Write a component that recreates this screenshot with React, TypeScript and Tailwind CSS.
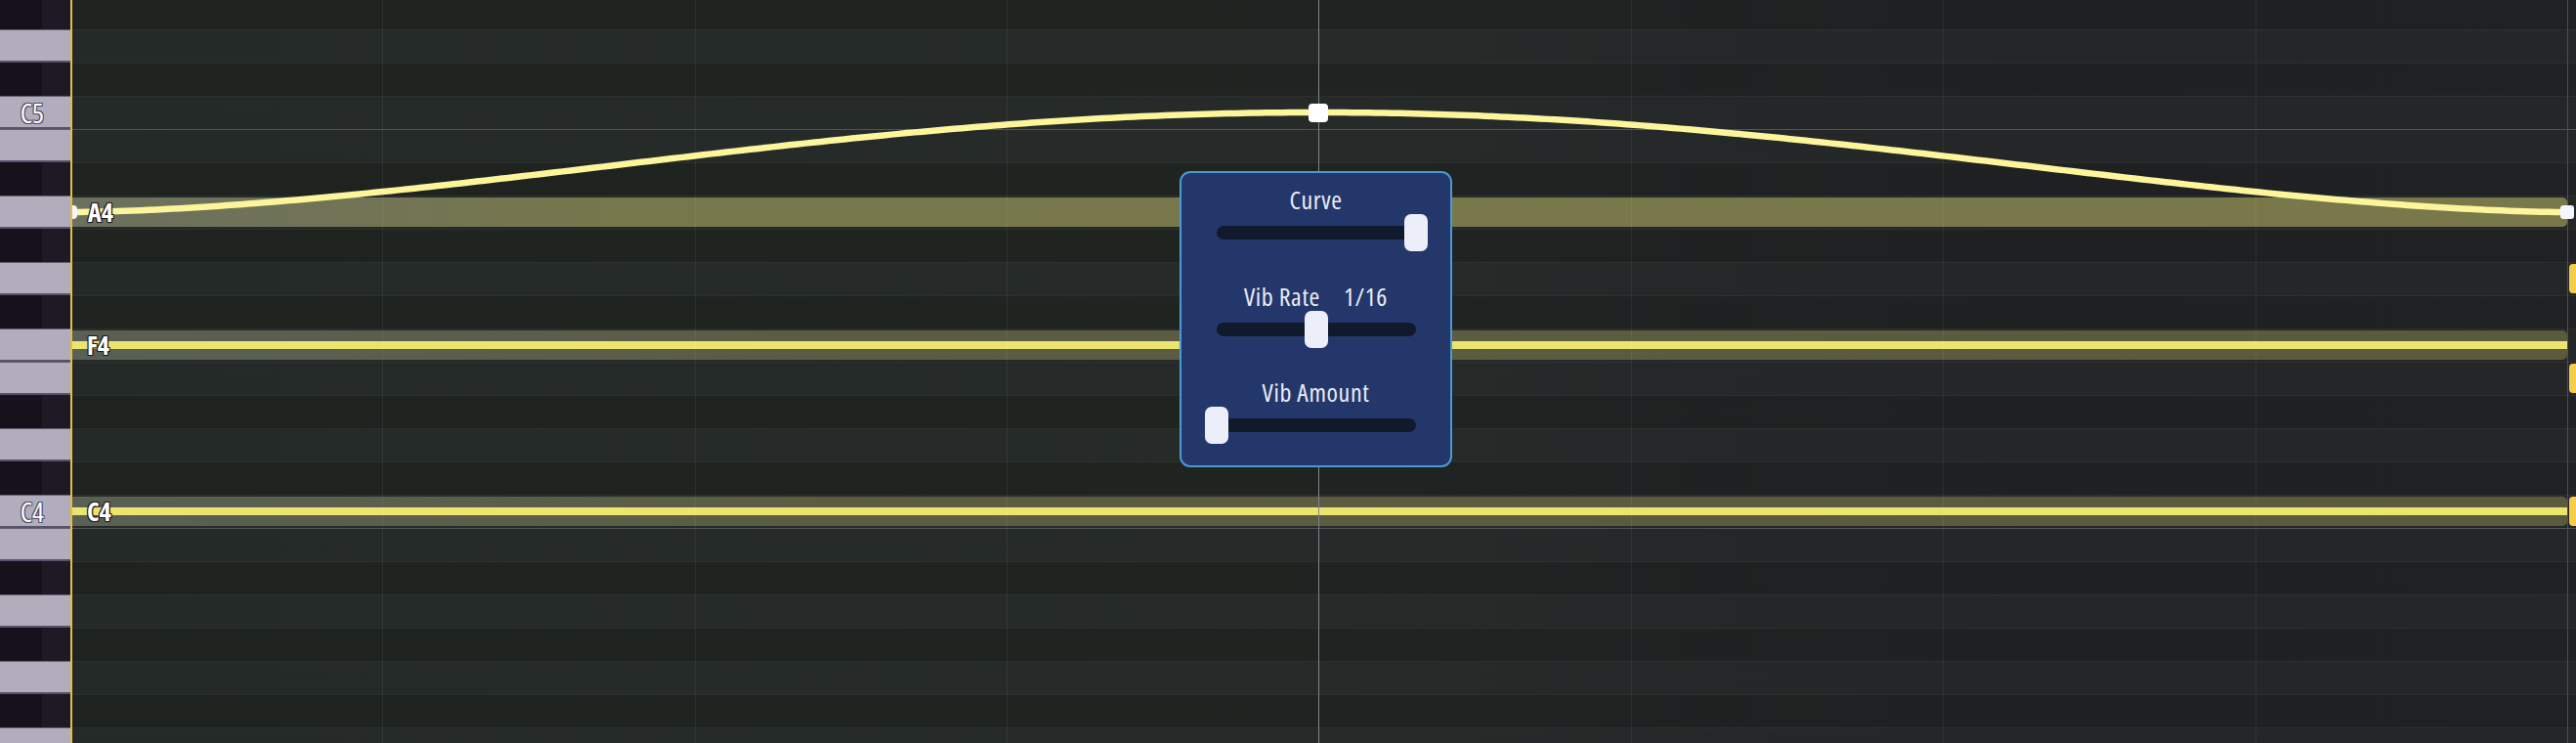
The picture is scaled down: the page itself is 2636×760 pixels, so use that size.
import clsx from 'clsx'

type Key = { name: string; black: boolean; label?: boolean }

const KEYS: Key[] = [
  { name: 'D#5', black: true },
  { name: 'D5', black: false },
  { name: 'C#5', black: true },
  { name: 'C5', black: false, label: true },
  { name: 'B4', black: false },
  { name: 'A#4', black: true },
  { name: 'A4', black: false },
  { name: 'G#4', black: true },
  { name: 'G4', black: false },
  { name: 'F#4', black: true },
  { name: 'F4', black: false },
  { name: 'E4', black: false },
  { name: 'D#4', black: true },
  { name: 'D4', black: false },
  { name: 'C#4', black: true },
  { name: 'C4', black: false, label: true },
  { name: 'B3', black: false },
  { name: 'A#3', black: true },
  { name: 'A3', black: false },
  { name: 'G#3', black: true },
  { name: 'G3', black: false },
  { name: 'F#3', black: true },
  { name: 'F3', black: false },
]

// notes held across the bar, plus the heads of the next bar's notes
const NOTES: Record<string, 'bend' | 'flat'> = { A4: 'bend', F4: 'flat', C4: 'flat' }
const NEXT = new Set(['G4', 'E4', 'C4'])

const BEAT_LINES = [
  'left-[317px] bg-white/[0.06]',
  'left-[637px] bg-white/[0.06]',
  'left-[956px] bg-white/[0.06]',
  'left-[1275px] bg-[#80848f]',
  'left-[1595px] bg-white/[0.06]',
  'left-[1914px] bg-white/[0.06]',
  'left-[2234px] bg-white/[0.06]',
  'left-[2553px] bg-[#4b4f5e]',
]

const cond = "font-['Open_Sans',sans-serif] [font-stretch:75%]"

function bendPath() {
  // ease up to the peak over the first half of the note, mirror back down
  const x0 = -2
  const peak = 1275
  const x1 = 2553
  const base = 217
  const amp = 102
  const pts: string[] = []
  for (let x = x0; x <= x1; x += 8) {
    const t = x <= peak ? (x - x0) / (peak - x0) : (x1 - x) / (x1 - peak)
    const rise = Math.pow(Math.sin((Math.PI * Math.max(0, t)) / 2), 1.65)
    pts.push(`${x},${(base - amp * rise).toFixed(2)}`)
  }
  pts.push(`${x1},${base}`)
  return 'M' + pts.join(' L')
}

function PianoKey({ k }: { k: Key }) {
  if (k.black) {
    return (
      <div className="flex h-[34px] shrink-0">
        <div className="w-[43px] bg-[#16121c]" />
        <div className="flex-1 bg-[#1d1a25]" />
      </div>
    )
  }
  return (
    <div className="flex h-[34px] shrink-0 items-center justify-end border-t border-b-2 border-t-[#625e71] border-b-[#57536a] bg-[#b1adbd] pr-[27px]">
      {k.label && (
        <span
          className={clsx(
            cond,
            'text-[28px] font-medium leading-none text-white [text-shadow:1px_1px_0_#4d4960,-1px_-1px_0_#4d4960,1px_-1px_0_#4d4960,-1px_1px_0_#4d4960]'
          )}
        >
          {k.name}
        </span>
      )}
    </div>
  )
}

function GridRow({ k }: { k: Key }) {
  const octave = k.name === 'B4' || k.name === 'B3'
  const note = NOTES[k.name]
  return (
    <div
      className={clsx(
        'flex h-[34px] shrink-0 border-t pt-[1px] pb-[2px]',
        k.black
          ? 'bg-[linear-gradient(90deg,#1e2320,#1f2421_45%,#1f2022_78%,#202123)]'
          : 'bg-[linear-gradient(90deg,#242a27,#262b29_45%,#242628_78%,#252628)]',
        octave ? 'border-[#51565b]' : 'border-[#2b302e]'
      )}
    >
      <div
        className={clsx(
          'flex w-[2553px] shrink-0 items-center rounded-r-[5px]',
          note === 'bend' && 'bg-[linear-gradient(90deg,#6b705e,#77774c_22%,#79784a)] pl-[16px]',
          note === 'flat' &&
            'bg-[linear-gradient(180deg,transparent_11px,#ebe46f_11px,#ebe46f_19px,transparent_19px),linear-gradient(90deg,#596054,#5c5c43_30%,#5c5a3c)] pl-[15px]'
        )}
      >
        {note && (
          <span
            className={clsx(
              cond,
              'relative z-[4] text-[26px] font-bold leading-none text-white [text-shadow:0_0_2px_#111,1px_1px_0_#222,-1px_-1px_0_#222,1px_-1px_0_#222,-1px_1px_0_#222]'
            )}
          >
            {k.name}
          </span>
        )}
      </div>
      {NEXT.has(k.name) && <div className="ml-[2px] w-[9px] shrink-0 rounded-l-[4px] bg-[#f5cd49]" />}
    </div>
  )
}

function Slider({ value }: { value: number }) {
  const thumb = value === 1 ? 'left-[192px]' : value === 0 ? 'left-[-12px]' : 'left-[90px]'
  return (
    <div className="relative ml-[36px] mt-[3px] h-[38px] w-[204px]">
      <div className="absolute top-[12px] h-[14px] w-full rounded-full bg-[#111a2c]" />
      <div className={clsx('absolute top-0 h-[38px] w-[24px] rounded-[7px] bg-[#eceff9]', thumb)} />
    </div>
  )
}

function NotePopover() {
  return (
    <div
      className={clsx(
        cond,
        'absolute left-[1133px] top-[175px] z-[5] flex h-[303px] w-[279px] flex-col rounded-[11px] border-2 border-[#4a9ad4] bg-[#24376a] pt-[15px] text-[26px] leading-[24px] tracking-[0.6px] text-[#e8ecf6]'
      )}
    >
      <div className="h-[24px] text-center">Curve</div>
      <Slider value={1} />
      <div className="mt-[34px] flex h-[24px] justify-center gap-[24px]">
        <span>Vib Rate</span>
        <span>1/16</span>
      </div>
      <Slider value={0.5} />
      <div className="mt-[33px] h-[24px] text-center">Vib Amount</div>
      <Slider value={0} />
    </div>
  )
}

export default function App() {
  return (
    <div className="flex h-[760px] w-[2636px] overflow-hidden bg-[#1f2421]">
      {/* keyboard */}
      <div className="w-[72px] shrink-0 overflow-hidden">
        <div className="-mt-[4px] flex flex-col">
          {KEYS.map((k) => (
            <PianoKey key={k.name} k={k} />
          ))}
        </div>
      </div>

      {/* note grid */}
      <div className="relative flex-1 overflow-hidden border-l-2 border-[#e6bd43]">
        <div className="absolute inset-0">
          {BEAT_LINES.map((c) => (
            <div key={c} className={clsx('absolute top-0 h-full w-px', c)} />
          ))}
        </div>

        <div className="-mt-[4px] flex flex-col">
          {KEYS.map((k) => (
            <GridRow key={k.name} k={k} />
          ))}
        </div>

        <svg className="pointer-events-none absolute inset-0" width="2562" height="760">
          <path d={bendPath()} fill="none" stroke="#fdf59c" strokeWidth="6.5" strokeLinecap="round" strokeLinejoin="round" />
          <rect x="-9" y="210" width="14" height="14" rx="4" fill="#f4f6ff" />
          <rect x="1265" y="106" width="20" height="19" rx="4" fill="#ffffff" />
          <rect x="2546" y="210" width="14" height="14" rx="3" fill="#f4f6ff" />
        </svg>

        <NotePopover />
      </div>
    </div>
  )
}
